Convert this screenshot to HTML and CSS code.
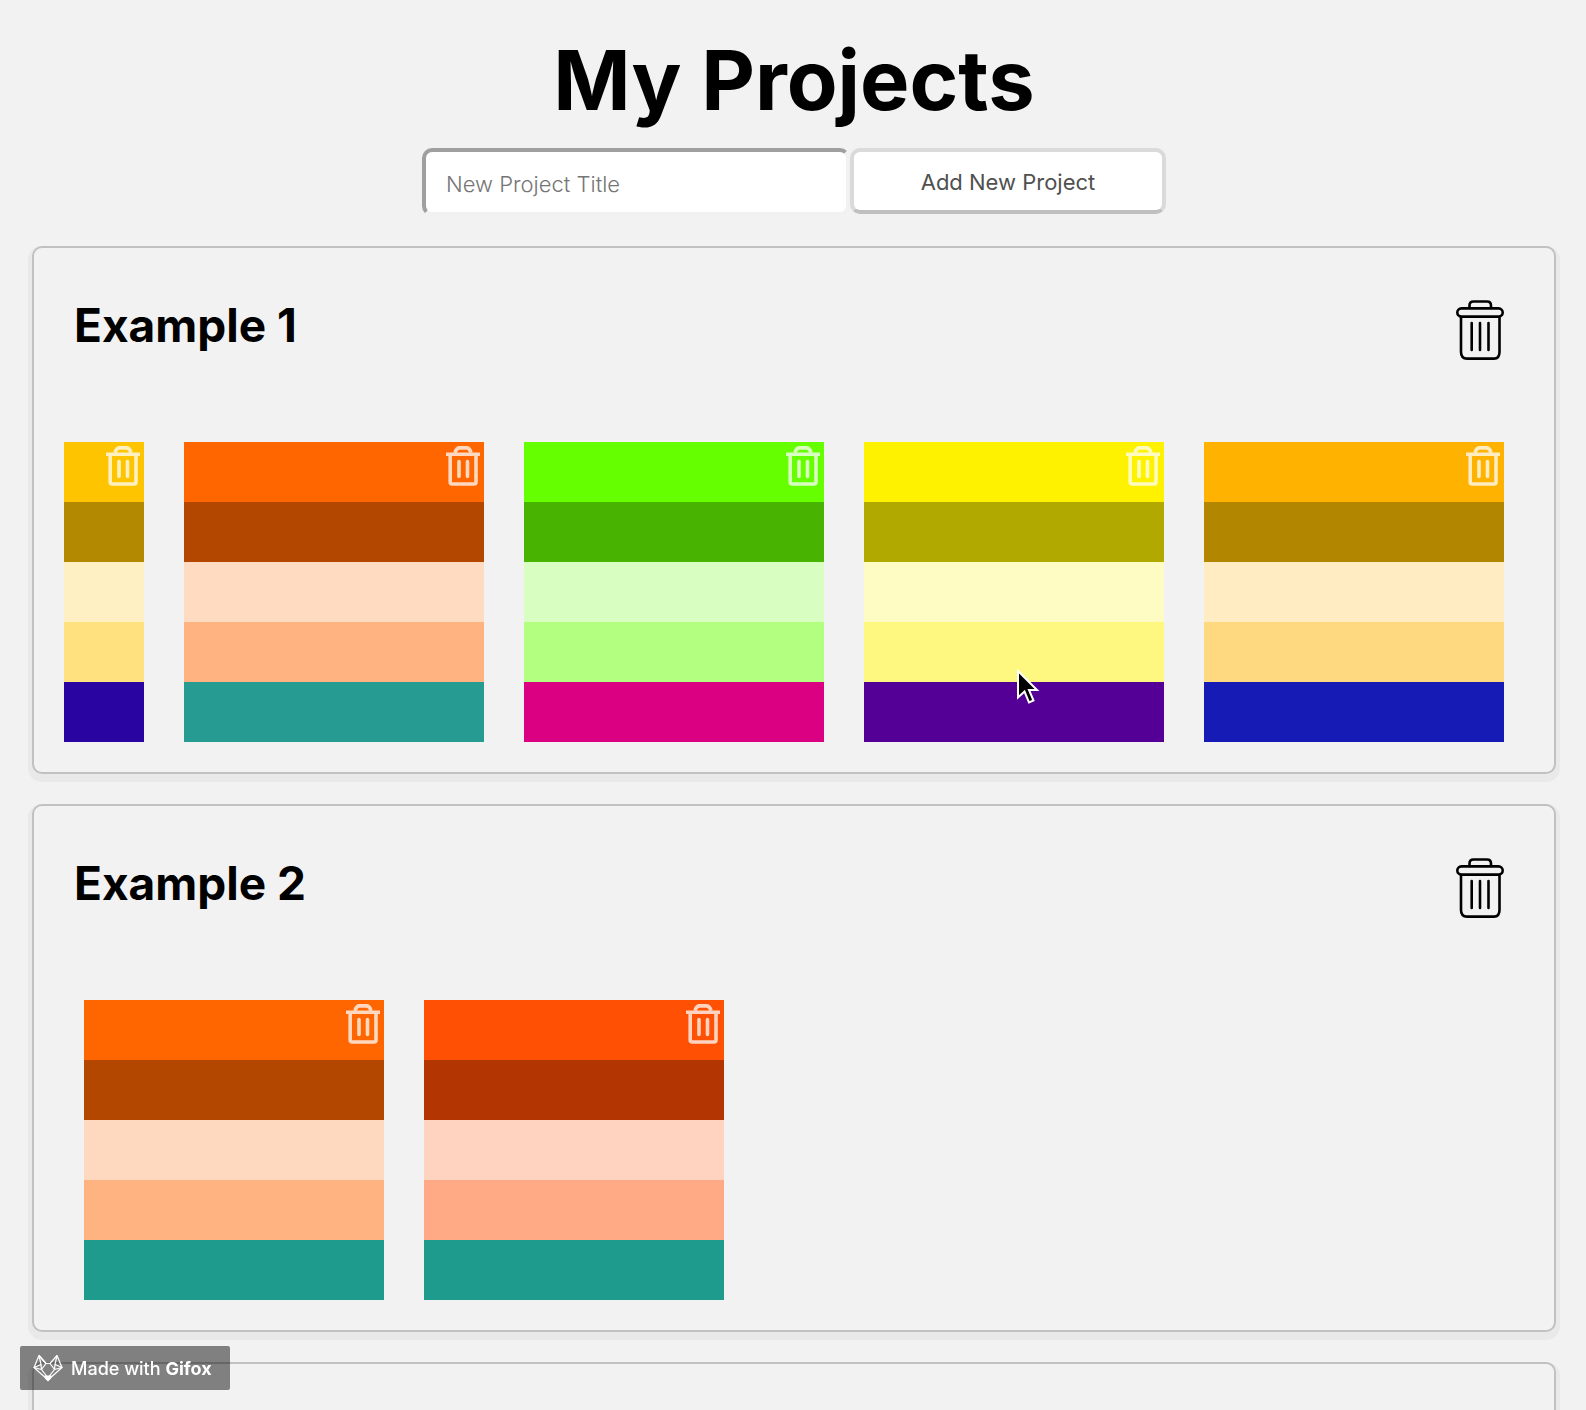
FILE: index.html
```
<!DOCTYPE html>
<html lang="en">
<head>
<meta charset="utf-8">
<meta name="viewport" content="width=device-width, initial-scale=1">
<title>My Projects</title>
<link rel="stylesheet" href="styles.css">
</head>
<body>
<svg class="symbols" aria-hidden="true">
  <symbol id="bin" viewBox="0 0 48 60">
    <g fill="none" stroke="currentColor" stroke-width="2.600" stroke-linecap="round">
      <path d="M13.500 8V5.500Q13.500 1.500 17.500 1.500H31Q35 1.500 35 5.500V8"/>
      <rect x="1.300" y="8.400" width="45.400" height="8.200" rx="4.100"/>
      <path d="M5 17V52Q5 58.600 11 58.600H38Q43.500 58.600 43.500 52V17M15.700 23V50M24 23V50M32.500 23V50"/>
    </g>
  </symbol>
  <symbol id="bin-small" viewBox="0 0 34 40">
    <g fill="none" stroke="currentColor" stroke-width="3.600">
      <path d="M0 8.300H34M9 6.500Q10.500 1.900 13.500 1.900H20.500Q23.500 1.900 25 6.500"/>
      <path d="M4.200 10.100V36Q4.200 38 6.200 38H28Q30 38 30 36V10.100"/>
      <path d="M13 15.500V30.500M21.500 15.500V30.500" stroke-linecap="round"/>
    </g>
  </symbol>
</svg>
<main class="page">
  <h1 class="title">My Projects</h1>
  <form class="new-project">
    <input class="new-title" type="text" placeholder="New Project Title" aria-label="New Project Title">
    <button class="add" type="button">Add New Project</button>
  </form>

  <section class="project">
    <header class="project-head">
      <h2>Example 1</h2>
      <button class="delete" type="button" aria-label="Delete Example 1"><svg><use href="#bin"/></svg></button>
    </header>
    <div class="palettes scrolled">
      <div class="palette amber"><i></i><i></i><i></i><i></i><i></i><button class="remove" type="button" aria-label="Delete palette"><svg><use href="#bin-small"/></svg></button></div>
      <div class="palette orange"><i></i><i></i><i></i><i></i><i></i><button class="remove" type="button" aria-label="Delete palette"><svg><use href="#bin-small"/></svg></button></div>
      <div class="palette green"><i></i><i></i><i></i><i></i><i></i><button class="remove" type="button" aria-label="Delete palette"><svg><use href="#bin-small"/></svg></button></div>
      <div class="palette yellow"><i></i><i></i><i></i><i></i><i></i><button class="remove" type="button" aria-label="Delete palette"><svg><use href="#bin-small"/></svg></button></div>
      <div class="palette gold"><i></i><i></i><i></i><i></i><i></i><button class="remove" type="button" aria-label="Delete palette"><svg><use href="#bin-small"/></svg></button></div>
    </div>
  </section>

  <section class="project">
    <header class="project-head">
      <h2>Example 2</h2>
      <button class="delete" type="button" aria-label="Delete Example 2"><svg><use href="#bin"/></svg></button>
    </header>
    <div class="palettes">
      <div class="palette orange plain"><i></i><i></i><i></i><i></i><i></i><button class="remove" type="button" aria-label="Delete palette"><svg><use href="#bin-small"/></svg></button></div>
      <div class="palette red"><i></i><i></i><i></i><i></i><i></i><button class="remove" type="button" aria-label="Delete palette"><svg><use href="#bin-small"/></svg></button></div>
    </div>
  </section>

  <section class="project"></section>
</main>

<div class="badge">
  <svg class="fox" viewBox="0 0 30 28" aria-hidden="true">
    <g fill="none" stroke="#fff" stroke-width="1.200" stroke-linejoin="round">
      <path d="M6 1.500L1 13.500L15 26L29 13.500L24 1.500L17 9.500H13Z"/>
      <path d="M6 1.500L8 10.500L1 13.500L8.500 15.500L13 9.500M6 1.500L13 9.500M8 10.500L8.500 15.500L15 24M24 1.500L22 10.500L29 13.500L21.500 15.500L17 9.500M22 10.500L21.500 15.500L15 24"/>
    </g>
    <path d="M11.500 21.500H18.500L18 24.500L15 27.500L12 24.500Z" fill="#fff"/>
  </svg>
  <span>Made with <b>Gifox</b></span>
</div>
<svg class="cursor" viewBox="0 0 24 38" aria-hidden="true">
  <path d="M2 3V29.500L8.500 23.500L13 34.500L17.500 32.500L13 22H21Z" fill="#000" stroke="#fff" stroke-width="2"/>
</svg>
</body>
</html>
```
FILE: styles.css
```
* { box-sizing: border-box; }

body {
  height: 100vh;
  margin: 0;
  overflow: hidden;
  background: #f2f2f2;
  color: #000;
  font-family: Inter, "Liberation Sans", sans-serif;
}

.symbols { position: absolute; width: 0; height: 0; }

.page { padding: 28px 30px 0 32px; }

.title {
  margin: 0;
  font-size: 83px;
  line-height: 104px;
  font-weight: 700;
  text-align: center;
}

.new-project {
  display: flex;
  justify-content: center;
  align-items: flex-start;
  margin: 16px 0 30px;
}

.new-title,
.add {
  border: 4px solid;
  border-radius: 10px;
  background: #fff;
  font-family: inherit;
  font-size: 22px;
}

.new-title {
  width: 428px;
  height: 68px;
  padding: 4px 20px 0;
  border-color: #9f9f9f #f1f1f1 #f1f1f1 #9f9f9f;
  font-weight: 300;
}

.new-title::placeholder { color: #757575; opacity: 1; }

.add {
  width: 316px;
  height: 66px;
  padding: 2px 0 0;
  border-color: #dadada #dadada #c0c0c0;
  color: #505050;
}

.project {
  min-height: 528px;
  margin-bottom: 30px;
  padding: 30px;
  border: 2px solid #c1c1c1;
  border-radius: 10px;
  box-shadow: 0 4px 0 4px #e9e9e9;
  background: #f2f2f2;
}

.project-head {
  display: flex;
  justify-content: space-between;
  height: 164px;
  padding: 16px 20px 0 10px;
}

.project-head h2 {
  margin: 0;
  font-size: 46px;
  line-height: 62px;
  font-weight: 700;
}

.delete,
.remove {
  padding: 0;
  border: 0;
  background: none;
}

.delete { width: 48px; height: 60px; margin-top: 6px; color: #000; }

.delete svg,
.remove svg { display: block; width: 100%; height: 100%; }

.palettes {
  display: flex;
  gap: 40px;
  padding: 0 20px;
  overflow: hidden;
}

.palettes.scrolled { justify-content: flex-end; }

.palette {
  position: relative;
  display: grid;
  grid-template-rows: repeat(5, 60px);
  flex: 0 0 300px;
}

.remove {
  position: absolute;
  top: 4px;
  right: 4px;
  width: 34px;
  height: 40px;
  color: #fff;
  opacity: 0.75;
}

.palette i:nth-child(1) { background: var(--base); }
.palette i:nth-child(2) { background: var(--dark); }
.palette i:nth-child(3) { background: var(--pale); }
.palette i:nth-child(4) { background: var(--light); }
.palette i:nth-child(5) { background: var(--accent); }

.amber { --base: #ffc400; --dark: #b28900; --pale: #fff0c4; --light: #ffe180; --accent: #2a04a0; }
.orange { --base: #ff6600; --dark: #b34700; --pale: #ffdbc1; --light: #ffb381; --accent: #259b92; }
.orange.plain { --pale: #ffd8c0; --accent: #1f9b8d; }
.green { --base: #66ff00; --dark: #48b300; --pale: #d8ffc1; --light: #b3ff80; --accent: #db0081; }
.yellow { --base: #fff200; --dark: #b2a900; --pale: #fffcc3; --light: #fff880; --accent: #540096; }
.gold { --base: #ffb300; --dark: #b38600; --pale: #ffecc2; --light: #ffd980; --accent: #171bb6; }
.red { --base: #ff5003; --dark: #b33502; --pale: #ffd3c0; --light: #ffaa84; --accent: #1f9b8d; }

.badge {
  position: fixed;
  left: 20px;
  bottom: 20px;
  display: flex;
  align-items: center;
  gap: 8px;
  width: 210px;
  height: 44px;
  padding-left: 13px;
  border-radius: 2px;
  background: rgba(0, 0, 0, 0.47);
  color: #fff;
  font-size: 18px;
  font-weight: 500;
  white-space: nowrap;
}

.fox { width: 30px; height: 28px; }

.cursor {
  position: absolute;
  left: 1016px;
  top: 668px;
  width: 24px;
  height: 38px;
}
```
